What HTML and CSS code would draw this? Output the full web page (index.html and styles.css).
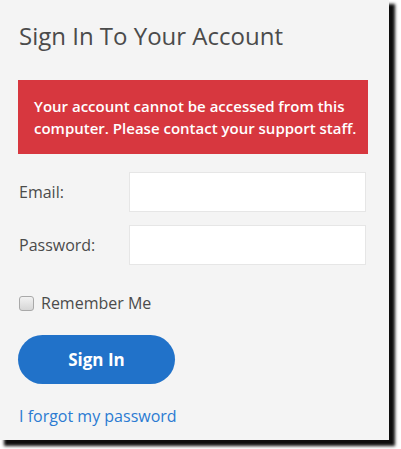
FILE: index.html
```html
<!DOCTYPE html>
<html lang="en">
<head>
<meta charset="UTF-8" />
<meta name="viewport" content="width=device-width, initial-scale=1" />
<title>Sign In</title>
<link rel="stylesheet" href="styles.css">
</head>
<body>
  <div class="panel">
    <h1 class="title">Sign In To Your Account</h1>

    <div class="alert">
      Your account cannot be accessed from this computer. Please contact your support staff.
    </div>

    <form class="login-form">
      <div class="field">
        <label for="email">Email:</label>
        <input id="email" type="text" />
      </div>
      <div class="field">
        <label for="password">Password:</label>
        <input id="password" type="password" />
      </div>

      <label class="remember">
        <span class="check-box"></span>
        <span>Remember Me</span>
      </label>

      <button type="button" class="sign-in">Sign In</button>

      <a href="#" class="forgot">I forgot my password</a>
    </form>
  </div>
</body>
</html>
```

FILE: styles.css
```css
/* Reset */
* {
  margin: 0;
  padding: 0;
  box-sizing: border-box;
}

body {
  background: #fff;
  font-family: "Open Sans", "Liberation Sans", sans-serif;
  color: #4b4b4b;
  height: 449px;
  overflow: hidden;
}

.panel {
  width: 389px;
  height: 440px;
  background: #f4f4f4;
  padding: 20px 21px 0 18px;
  box-shadow: 5px 5px 3px 1px rgba(0, 0, 0, 0.95);
}

.title {
  font-weight: 400;
  font-size: 24px;
  line-height: 32px;
  padding-left: 1px;
  color: #4b4b4b;
}

.alert {
  margin-top: 28px;
  background: #d7373f;
  color: #fff;
  font-size: 15px;
  font-weight: 600;
  line-height: 22px;
  padding: 15px 10px 15px 16px;
}

.login-form {
  display: flex;
  flex-direction: column;
  margin-top: 18px;
}

.field {
  display: flex;
  align-items: center;
  height: 40px;
  margin-bottom: 13px;
}

.field label {
  width: 111px;
  padding-left: 1px;
  font-size: 16px;
}

.field input {
  flex: 1;
  height: 40px;
  border: 1px solid #e6e6e6;
  background: #fff;
  margin-right: 2px;
}

.remember {
  display: flex;
  align-items: center;
  gap: 7px;
  margin-top: 14px;
  padding-left: 1px;
  font-size: 16px;
}

.check-box {
  width: 15px;
  height: 15px;
  border: 1px solid #a9a9a9;
  border-radius: 3px;
  background: linear-gradient(#f2f2f2, #d6d6d6);
}

.sign-in {
  margin-top: 21px;
  width: 157px;
  height: 49px;
  border: none;
  border-radius: 25px;
  background: #2172c9;
  color: #fff;
  font-family: inherit;
  font-size: 17px;
  font-weight: 700;
  cursor: pointer;
}

.forgot {
  margin-top: 21px;
  padding-left: 1px;
  font-size: 16px;
  color: #2b7bd2;
  text-decoration: none;
  align-self: flex-start;
}
```
